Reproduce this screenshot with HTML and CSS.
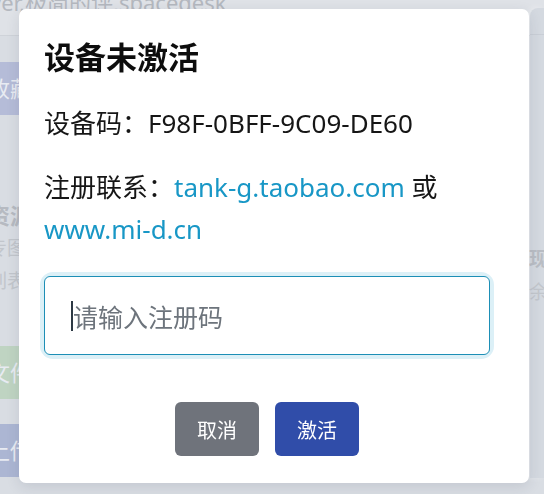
FILE: index.html
```html
<!DOCTYPE html>
<html lang="zh-CN">
<head>
<meta charset="utf-8">
<title>设备未激活</title>
<link rel="stylesheet" href="styles.css">
</head>
<body>
<div class="page">
  <div class="page-head">
    <div class="page-title">ever,极简的评,spacedesk</div>
  </div>
  <div class="page-body">
    <div class="col-left">
      <div class="btn-bg btn-purple">收藏</div>
      <div class="sec-title">资源</div>
      <div class="sec-line">专图</div>
      <div class="sec-line">列表</div>
      <div class="btn-bg btn-green">文件</div>
      <div class="btn-bg btn-blue">上传</div>
    </div>
    <div class="col-right">
      <div class="card">
        <div class="card-head"></div>
        <div class="card-text">
          <div class="sec-line strong">现</div>
          <div class="sec-line">余</div>
        </div>
      </div>
    </div>
  </div>
</div>

<div class="modal">
  <h1 class="modal-title">设备未激活</h1>
  <p class="modal-line">设备码：F98F-0BFF-9C09-DE60</p>
  <p class="modal-line">注册联系：<a class="link" href="#">tank-g.taobao.com</a> 或 <a class="link" href="#">www.mi-d.cn</a></p>
  <div class="field">
    <input class="code-input" type="text" placeholder="请输入注册码">
    <span class="caret"></span>
  </div>
  <div class="modal-footer">
    <button class="btn btn-cancel">取消</button>
    <button class="btn btn-ok">激活</button>
  </div>
</div>
</body>
</html>
```

FILE: styles.css
```css
* { box-sizing: border-box; }

html, body {
  margin: 0;
  padding: 0;
}

body {
  width: 544px;
  height: 494px;
  overflow: hidden;
  background: #d9dde3;
  font-family: "Noto Sans", "Noto Sans CJK SC", sans-serif;
  color: #1b1d20;
}

/* ---------- dimmed page behind the dialog ---------- */
.page {
  height: 494px;
}

.page-head {
  display: flow-root;
  height: 36px;
  background: #dfe2e7;
  border-bottom: 1px solid #cfd3d9;
}

.page-title {
  font-size: 22px;
  line-height: 24px;
  margin-top: -10px;
  margin-left: -22px;
  color: #b4b8bf;
  white-space: nowrap;
}

.page-body {
  display: flex;
  justify-content: space-between;
}

.col-left {
  width: 200px;
  display: flex;
  flex-direction: column;
  margin-left: -12px;
}

.btn-bg {
  height: 53px;
  width: 120px;
  font-size: 22px;
  line-height: 53px;
  color: #e8ebf2;
}

.btn-purple { background: #b5bcd8; margin-top: 26px; }
.btn-green  { background: #bfd4c2; margin-top: 53px; }
.btn-blue   { background: #acb6d3; margin-top: 25px; }

.sec-title {
  margin-top: 88px;
  font-size: 22px;
  font-weight: 700;
  line-height: 24px;
  color: #b6bac1;
}

.sec-line {
  margin-top: 9px;
  font-size: 19px;
  line-height: 24px;
  color: #c2c6cc;
}

.sec-line.strong { font-weight: 700; color: #b9bdc4; }

.col-right {
  width: 14px;
  margin-top: -28px;
}

.card {
  height: 470px;
  border-radius: 8px 0 0 0;
  background: #d4d9e0;
  box-shadow: -3px 0 6px rgba(255,255,255,0.35);
}

.card-head {
  height: 27px;
  border-bottom: 1px solid #c9ced6;
}

.card-text {
  padding-top: 203px;
  margin-left: -1px;
}

/* ---------- dialog ---------- */
.modal {
  position: fixed;
  left: 19px;
  top: 9px;
  width: 510px;
  height: 474px;
  background: #ffffff;
  border-radius: 7px;
  padding: 30px 39px 27px 25px;
  box-shadow: 0 4px 14px rgba(40, 50, 70, 0.12);
}

.modal-title {
  margin: 0 0 27px 0;
  font-size: 31px;
  line-height: 36px;
  font-weight: 700;
  color: #0d0d0d;
}

.modal-line {
  margin: 0 0 22px 0;
  font-size: 26px;
  line-height: 42px;
  color: #161616;
}

.link {
  color: #1897c6;
  text-decoration: none;
}

.field {
  position: relative;
  margin-top: 26px;
  border-radius: 9px;
  box-shadow: 0 0 0 4px #dcf0f7;
}

.code-input {
  display: block;
  width: 100%;
  height: 79px;
  border: 1px solid #1d8fb6;
  border-radius: 6px;
  padding: 0 20px 0 28px;
  font-family: "Noto Sans CJK SC", sans-serif;
  font-size: 25px;
  color: #222;
  background: #fff;
  outline: none;
}

.code-input::placeholder {
  color: #6d747c;
}

.caret {
  position: absolute;
  left: 27px;
  top: 25px;
  width: 2px;
  height: 30px;
  background: #2d3944;
}

.modal-footer {
  display: flex;
  justify-content: center;
  gap: 16px;
  margin-top: 47px;
}

.btn {
  width: 84px;
  height: 54px;
  border: none;
  border-radius: 6px;
  font-family: "Noto Sans CJK SC", sans-serif;
  font-size: 20px;
  color: #ffffff;
  cursor: pointer;
}

.btn-cancel { background: #6f737b; }
.btn-ok     { background: #304da9; }
```
